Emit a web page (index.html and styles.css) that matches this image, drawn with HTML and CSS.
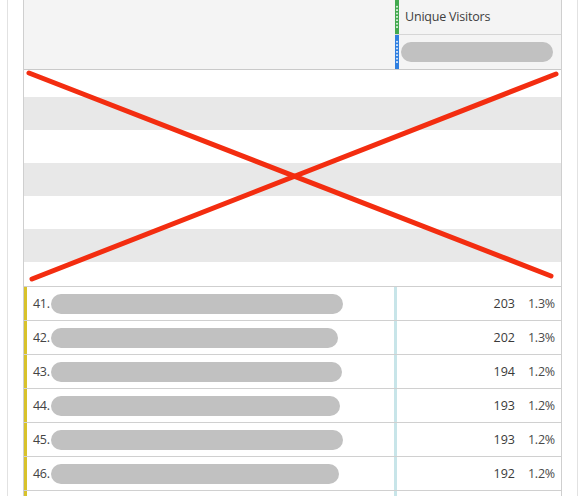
FILE: index.html
```html
<!DOCTYPE html>
<html>
<head>
<meta charset="utf-8">
<link rel="stylesheet" href="styles.css">
</head>
<body>
<div class="card">
  <div class="table">
    <div class="head">
      <div class="head-left"></div>
      <div class="head-col">
        <div class="head-cell title"><span class="grip green"><i></i></span><span class="label">Unique Visitors</span></div>
        <div class="head-cell seg"><span class="grip blue"><i></i></span><span class="pill hp"></span></div>
      </div>
    </div>
    <div class="skeleton">
      <div class="stripe w s1"></div>
      <div class="stripe g"></div>
      <div class="stripe w"></div>
      <div class="stripe g"></div>
      <div class="stripe w"></div>
      <div class="stripe g"></div>
      <div class="stripe w s7"></div>
      <svg class="cross" width="539" height="216" viewBox="0 0 539 216">
        <line x1="5" y1="3" x2="527" y2="206" />
        <line x1="532" y1="4" x2="8" y2="209" />
      </svg>
    </div>
    <div class="rows">
      <div class="row"><div class="name"><span class="num">41.</span><span class="pill" style="width:292px"></span></div><div class="vals"><span class="v">203</span><span class="p">1.3%</span></div></div>
      <div class="row"><div class="name"><span class="num">42.</span><span class="pill" style="width:287px"></span></div><div class="vals"><span class="v">202</span><span class="p">1.3%</span></div></div>
      <div class="row"><div class="name"><span class="num">43.</span><span class="pill" style="width:291px"></span></div><div class="vals"><span class="v">194</span><span class="p">1.2%</span></div></div>
      <div class="row"><div class="name"><span class="num">44.</span><span class="pill" style="width:289px"></span></div><div class="vals"><span class="v">193</span><span class="p">1.2%</span></div></div>
      <div class="row"><div class="name"><span class="num">45.</span><span class="pill" style="width:292px"></span></div><div class="vals"><span class="v">193</span><span class="p">1.2%</span></div></div>
      <div class="row"><div class="name"><span class="num">46.</span><span class="pill" style="width:288px"></span></div><div class="vals"><span class="v">192</span><span class="p">1.2%</span></div></div>
      <div class="row"><div class="name"><span class="num"></span></div><div class="vals"></div></div>
    </div>
  </div>
</div>
</body>
</html>
```

FILE: styles.css
```css
html, body {
  margin: 0;
  padding: 0;
  background: #ffffff;
  overflow: hidden;
}
body {
  font-family: "Open Sans", "Noto Sans", sans-serif;
  color: #444444;
}
.card {
  margin-left: 7px;
  width: 539px;
  height: 496px;
  padding: 0 15px;
  border-left: 1px solid #e2e2e2;
  border-right: 1px solid #e2e2e2;
  overflow: hidden;
}
.table {
  width: 537px;
  border-left: 1px solid #cfcfcf;
  border-right: 1px solid #cfcfcf;
}
.head {
  display: flex;
  height: 69px;
  background: #f4f4f4;
  border-bottom: 1px solid #c9c9c9;
}
.head-left {
  width: 371px;
}
.head-col {
  flex: 1;
  display: flex;
  flex-direction: column;
}
.head-cell {
  display: flex;
  align-items: stretch;
  height: 34px;
}
.head-cell.title {
  border-bottom: 1px solid #d6d6d6;
}
.grip {
  width: 4px;
  flex: none;
  display: flex;
  align-items: center;
  justify-content: center;
}
.grip i {
  display: block;
  width: 2px;
  height: 24px;
  background-image: radial-gradient(circle, rgba(255,255,255,0.75) 0.8px, transparent 1.1px);
  background-size: 2px 3.4px;
}
.grip.green { background: #42a94f; }
.grip.blue { background: #2f7fe0; }
.label {
  font-size: 12.5px;
  line-height: 34px;
  padding-left: 6px;
  color: #404040;
  letter-spacing: -0.2px;
}
.pill {
  display: block;
  height: 20px;
  border-radius: 10px;
  background: #c1c1c1;
}
.pill.hp {
  width: 152px;
  margin: 7px 0 0 2px;
}
.skeleton {
  position: relative;
  height: 216px;
}
.stripe { height: 33px; }
.stripe.s1 { height: 27px; }
.stripe.s7 { height: 24px; }
.stripe.w { background: #ffffff; }
.stripe.g { background: #e8e8e8; }
.cross {
  position: absolute;
  left: 0;
  top: 0;
}
.cross line {
  stroke: #f32d10;
  stroke-width: 5;
  stroke-linecap: round;
}
.rows {
  border-top: 1px solid #cfcfcf;
}
.row {
  display: flex;
  height: 33px;
  border-bottom: 1px solid #d0d0d0;
}
.name {
  width: 361px;
  border-left: 3px solid #d8c22b;
  display: flex;
  align-items: center;
  padding-left: 6px;
  font-size: 12.5px;
}
.num {
  width: 18px;
  letter-spacing: -0.3px;
}
.vals {
  flex: 1;
  border-left: 3px solid #c8e5e9;
  display: flex;
  justify-content: flex-end;
  align-items: center;
  padding-right: 6px;
  font-size: 12.5px;
}
.v {
  color: #3a3a3a;
}
.p {
  width: 40px;
  text-align: right;
  color: #4a4a4a;
  letter-spacing: -0.2px;
}
```
